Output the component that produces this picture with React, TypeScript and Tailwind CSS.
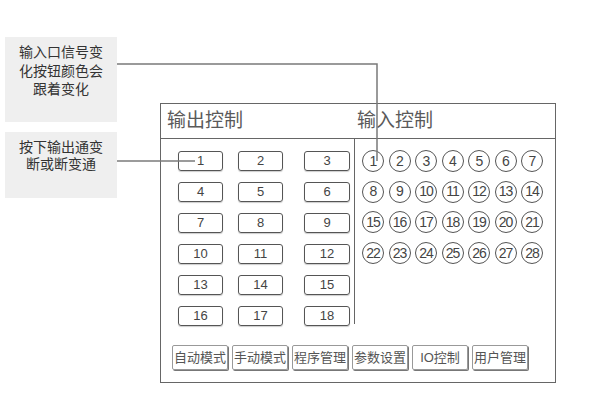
import React from "react";

const font = "font-['Liberation_Sans','Noto_Sans_CJK_SC',sans-serif]";

const outputRows = Array.from({ length: 6 }, (_, r) => [r * 3 + 1, r * 3 + 2, r * 3 + 3]);
const inputs = Array.from({ length: 28 }, (_, i) => i + 1);
const modes = ["自动模式", "手动模式", "程序管理", "参数设置", "IO控制", "用户管理"];

const Note = ({ lines, className }: { lines: string[]; className: string }) => (
  <div className={`w-[112px] bg-[#efefef] text-center text-[14px] text-[#333] ${className}`}>
    {lines.map((line) => (
      <div key={line}>{line}</div>
    ))}
  </div>
);

const OutButton = ({ n, className = "" }: { n: number; className?: string }) => (
  <div
    className={`w-[45px] h-[20px] flex items-center justify-center rounded-[3px] border border-[#555] shadow-[0_1px_1px_rgba(0,0,0,0.2)] text-[13px] text-[#444] ${className}`}
  >
    {n}
  </div>
);

export default function App() {
  return (
    <div className={`relative flex w-[611px] h-[398px] bg-white ${font}`}>
      <div className="flex flex-col w-[160px] pl-[5px] pt-[37px]">
        <Note
          lines={["输入口信号变", "化按钮颜色会", "跟着变化"]}
          className="h-[85px] pt-[6px] leading-[18.5px]"
        />
        <Note
          lines={["按下输出通变", "断或断变通"]}
          className="mt-[10px] h-[66px] pt-[7px] leading-[16.5px]"
        />
      </div>

      <div className="mt-[103px] w-[396px] h-[280px] border border-[#666] flex flex-col">
        <div className="flex items-center h-[35px] border-b border-[#666] text-[19px] text-[#5a5a5a]">
          <div className="w-[193px] pl-[6px]">输出控制</div>
          <div className="pl-[3px]">输入控制</div>
        </div>

        <div className="flex">
          <div className="w-[193px] pt-[12px] pl-[17px] flex flex-col gap-[11px]">
            {outputRows.map(([a, b, c]) => (
              <div key={a} className="flex">
                <OutButton n={a} />
                <OutButton n={b} className="ml-[15px]" />
                <OutButton n={c} className="ml-[21px] w-[46px]" />
              </div>
            ))}
          </div>

          <div className="self-start h-[185px] border-l border-[#666] pl-[7px] pt-[11px]">
            <div className="grid grid-cols-[repeat(7,26.5px)] gap-y-[8.7px]">
              {inputs.map((n) => (
                <div
                  key={n}
                  className="w-[22px] h-[22px] rounded-full border border-[#555] flex items-center justify-center text-[14px] tracking-[-1px] text-[#444]"
                >
                  {n}
                </div>
              ))}
            </div>
          </div>
        </div>

        <div className="flex gap-[4px] mt-[19px] pl-[11px]">
          {modes.map((m) => (
            <div
              key={m}
              className="w-[56px] h-[25px] flex items-center justify-center rounded-[2px] border border-[#999] shadow-[1px_1px_0_#777] text-[13px] text-[#555] whitespace-nowrap"
            >
              {m}
            </div>
          ))}
        </div>
      </div>

      <svg className="absolute inset-0 pointer-events-none" width="611" height="398">
        <polyline points="117,64 377,64 377,161" fill="none" stroke="#7a7a7a" strokeWidth="1.5" />
        <line x1="117" y1="161" x2="195" y2="161" stroke="#7a7a7a" strokeWidth="1.5" />
      </svg>
    </div>
  );
}
